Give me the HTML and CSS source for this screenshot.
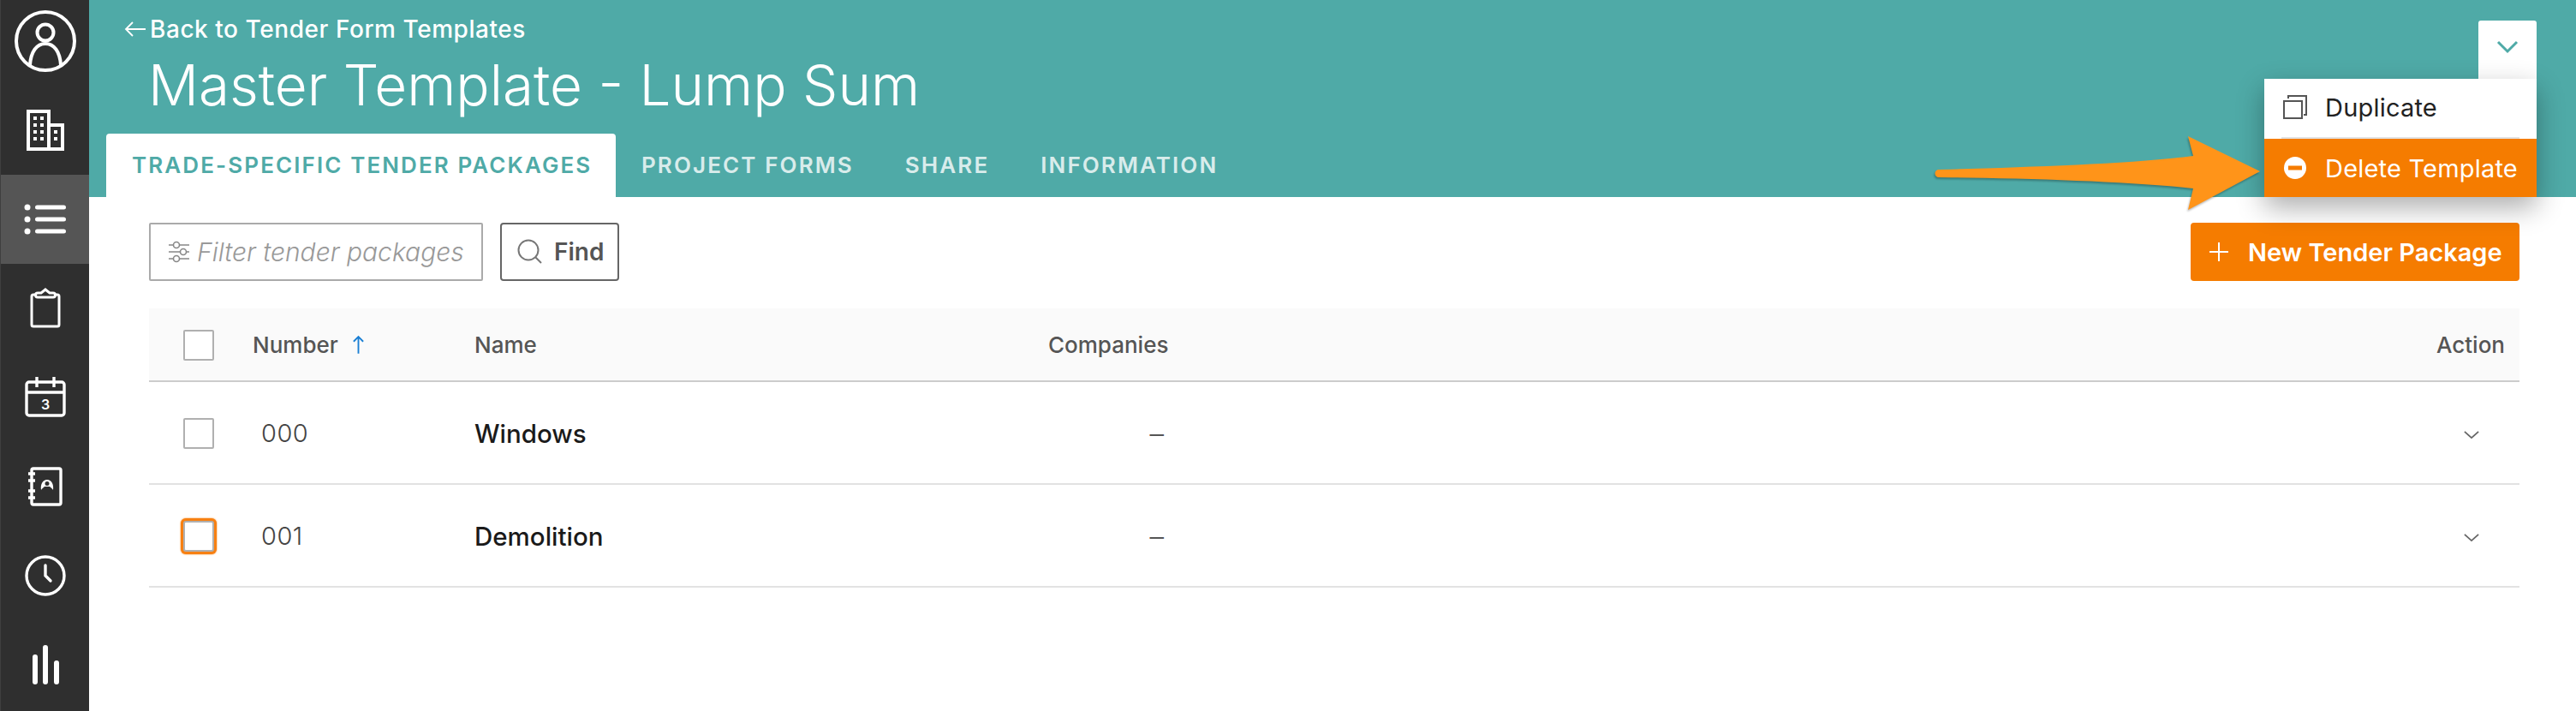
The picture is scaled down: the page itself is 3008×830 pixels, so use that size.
FILE: index.html
```html
<!DOCTYPE html>
<html lang="en">
<head>
<meta charset="utf-8">
<title>Master Template - Lump Sum</title>
<link rel="stylesheet" href="styles.css">
</head>
<body>
<div class="app">
  <nav class="sidebar">
    <a class="nav-item"><svg class="nav-icon" viewBox="0 0 80 80"><circle cx="40" cy="38" r="34"/><circle cx="40" cy="28" r="9.5"/><path d="M22 66c1-16 8-25 18-25s17 9 18 25"/></svg></a>
    <a class="nav-item"><svg class="nav-icon" viewBox="0 0 80 80"><path d="M20 62V18h24v44zM44 34h16v28H44z"/><g class="fill"><rect x="26" y="24" width="4" height="4"/><rect x="34" y="24" width="4" height="4"/><rect x="26" y="32" width="4" height="4"/><rect x="34" y="32" width="4" height="4"/><rect x="26" y="40" width="4" height="4"/><rect x="34" y="40" width="4" height="4"/><rect x="26" y="48" width="4" height="4"/><rect x="34" y="48" width="4" height="4"/><rect x="50" y="40" width="4" height="4"/><rect x="50" y="48" width="4" height="4"/></g></svg></a>
    <a class="nav-item active"><svg class="nav-icon" viewBox="0 0 80 80"><g class="fill"><circle cx="19" cy="26" r="3.5"/><circle cx="19" cy="40" r="3.5"/><circle cx="19" cy="54" r="3.5"/></g><path class="round" d="M30.500 26h31M30.500 40h31M30.500 54h31"/></svg></a>
    <a class="nav-item"><svg class="nav-icon clip" viewBox="0 0 80 80"><path d="M28 24h-2a2 2 0 0 0-2 2v33a2 2 0 0 0 2 2h28a2 2 0 0 0 2-2V26a2 2 0 0 0-2-2h-2"/><path d="M31 27a2.500 2.500 0 0 1 0-5h4l5-4 5 4h4a2.500 2.500 0 0 1 0 5z"/></svg></a>
    <a class="nav-item"><svg class="nav-icon thin" viewBox="0 0 80 80"><rect x="18" y="22" width="44" height="39" rx="3"/><path d="M18 34h44M30 16v12M50 16v12"/><text class="cal-day" x="40" y="54" text-anchor="middle">3</text></svg></a>
    <a class="nav-item"><svg class="nav-icon thin" viewBox="0 0 80 80"><rect x="24" y="19" width="34" height="42" rx="2"/><path d="M20 25h8M20 33h8M20 45h8M20 53h8"/><path class="fill even" d="M35 44c-1-7 2-12 7-12s8 5 7 12c-1-2-3-3-4-4h-6c-1 1-3 2-4 4zM42 34a2.500 2.500 0 1 0 0 5 2.500 2.500 0 0 0 0-5z"/></svg></a>
    <a class="nav-item"><svg class="nav-icon thin" viewBox="0 0 80 80"><circle cx="40" cy="40" r="22"/><path class="round" d="M40 28v12l6 6"/></svg></a>
    <a class="nav-item"><svg class="nav-icon" viewBox="0 0 80 80"><path class="bars" d="M28 31v29M40 20v40M53 38v22"/></svg></a>
  </nav>

  <main class="main">
    <header class="banner">
      <a class="back"><svg class="back-arrow" viewBox="0 0 26 20"><path d="M25 10H2M10 2l-8 8 8 8"/></svg>Back to Tender Form Templates</a>
      <h1 class="title">Master Template - Lump Sum</h1>
      <div class="tabs">
        <a class="tab current">TRADE-SPECIFIC TENDER PACKAGES</a>
        <a class="tab">PROJECT FORMS</a>
        <a class="tab">SHARE</a>
        <a class="tab">INFORMATION</a>
      </div>
      <div class="actions">
        <button class="actions-toggle"><svg class="toggle-chevron" viewBox="0 0 26 16"><path d="M2 2l11 11L24 2"/></svg></button>
        <div class="menu">
          <a class="menu-item"><svg class="menu-icon" viewBox="0 0 28 28"><path d="M1 7h21v20H1z"/><path d="M6 4V1h21v22h-3"/></svg>Duplicate</a>
          <a class="menu-item danger"><svg class="menu-icon" viewBox="0 0 28 28"><circle class="disc" cx="14" cy="14" r="13"/><rect class="bar" x="6" y="11.500" width="16" height="5"/></svg>Delete Template</a>
        </div>
      </div>
    </header>

    <section class="content">
      <div class="toolbar">
        <div class="filter">
          <svg class="filter-icon" viewBox="0 0 26 26"><path d="M1 5h5M14 5h11M1 13h13M22 13h3M1 21h5M14 21h11"/><circle cx="10" cy="5" r="3.500"/><circle cx="18" cy="13" r="3.500"/><circle cx="10" cy="21" r="3.500"/></svg>
          <span class="filter-text">Filter tender packages</span>
        </div>
        <button class="find"><svg class="find-icon" viewBox="0 0 30 30"><circle cx="13" cy="13" r="11.500"/><path d="M21 21l7 7"/></svg>Find</button>
        <button class="new"><svg class="plus" viewBox="0 0 24 24"><path d="M12 1v22M1 12h22"/></svg>New Tender Package</button>
      </div>

      <div class="table">
        <div class="row head">
          <div class="cell-check"><span class="check"></span></div>
          <div class="num-head">Number<svg class="sort" viewBox="0 0 16 24"><path d="M8 23V2M2 8l6-6 6 6"/></svg></div>
          <div>Name</div>
          <div class="companies">Companies</div>
          <div class="action">Action</div>
        </div>
        <div class="row">
          <div class="cell-check"><span class="check"></span></div>
          <div class="num">000</div>
          <div class="name">Windows</div>
          <div class="companies dash">–</div>
          <div class="action"><svg class="row-chevron" viewBox="0 0 20 11"><path d="M1 1l9 8 9-8"/></svg></div>
        </div>
        <div class="row">
          <div class="cell-check"><span class="check focus"></span></div>
          <div class="num">001</div>
          <div class="name">Demolition</div>
          <div class="companies dash">–</div>
          <div class="action"><svg class="row-chevron" viewBox="0 0 20 11"><path d="M1 1l9 8 9-8"/></svg></div>
        </div>
      </div>
    </section>
  </main>
</div>
<svg class="callout" viewBox="0 0 400 100"><path d="M14 48C120 45 240 41 311 32L305 9 389 50 305 95 311 70C240 62 120 58 14 57a4.500 4.500 0 0 1 0-9z"/></svg>
</body>
</html>
```
FILE: styles.css
```css
* { box-sizing: border-box; }
html, body { margin: 0; height: 100%; background: #fff; }
body { font-family: "Inter", "Liberation Sans", sans-serif; color: #555; position: relative; overflow: hidden; }
a { display: block; }
button { font-family: inherit; }

.app { display: flex; height: 830px; }

.sidebar { width: 104px; flex: none; background: #2f2f2f; border-left: 1px solid #3f3f3f; display: flex; flex-direction: column; }
.nav-item { height: 104px; flex: none; display: flex; align-items: center; justify-content: center; }
.nav-item:first-child { height: 100px; }
.nav-item.active { background: #555; }
.nav-icon { width: 80px; height: 80px; fill: none; stroke: #fff; stroke-width: 4; }
.nav-icon.thin { stroke-width: 3.4; }
.nav-icon.clip { stroke-width: 3; }
.nav-icon .fill { fill: #fff; stroke: none; }
.nav-icon .even { fill-rule: evenodd; }
.nav-icon .round { stroke-linecap: round; stroke-width: 5; }
.nav-icon.thin .round { stroke-width: 3.4; }
.nav-icon .bars { stroke-linecap: round; stroke-width: 6; }
.cal-day { font-size: 16px; font-weight: 600; fill: #fff; stroke: none; }

.main { flex: 1; min-width: 0; display: flex; flex-direction: column; }

.banner { position: relative; height: 230px; flex: none; background: #4faaa7; color: #fff; padding: 16px 0 0 20px; display: flex; flex-direction: column; }
.back { display: flex; align-items: center; gap: 4px; height: 36px; margin-left: 21px; font-size: 28px; font-weight: 500; letter-spacing: .55px; }
.back-arrow { width: 26px; height: 20px; flex: none; fill: none; stroke: #fff; stroke-width: 1.8; }
.title { margin: 8px 0 0 49px; height: 80px; line-height: 80px; font-size: 65.5px; font-weight: 300; }
.tabs { display: flex; margin-top: 16px; height: 74px; }
.tab { padding: 0 30px; line-height: 74px; font-size: 26px; font-weight: 600; letter-spacing: 2.1px; color: rgba(255,255,255,.8); white-space: nowrap; }
.tab.current { background: #fff; color: #4faaa7; border-radius: 4px 4px 0 0; width: 595px; }

.actions { position: absolute; top: 24px; right: 46px; z-index: 5; }
.actions-toggle { display: flex; align-items: center; justify-content: center; width: 68px; height: 68px; margin-left: auto; padding: 0 0 6px; border: 0; background: #fff; border-radius: 3px 3px 0 0; }
.toggle-chevron { width: 26px; height: 16px; fill: none; stroke: #4faaa7; stroke-width: 3; }
.menu { width: 318px; background: #fff; box-shadow: 0 12px 30px rgba(0,0,0,.32); }
.menu-item { display: flex; align-items: center; gap: 21px; height: 68px; padding: 0 22px; font-size: 29px; letter-spacing: .2px; color: #222; white-space: nowrap; }
.menu-item.danger { height: 68px; background: #f57c00; color: #fff; }
.menu-item:first-child { height: 70px; padding-bottom: 4px; position: relative; }
.menu-item:first-child::after { content: ""; position: absolute; left: 20px; right: 20px; bottom: 0; height: 2px; background: #e2e2e2; }
.menu-icon { width: 28px; height: 28px; flex: none; fill: none; stroke: #555; stroke-width: 2; }
.menu-icon .disc { fill: #fff; stroke: none; }
.menu-icon .bar { fill: #f57c00; stroke: none; }

.content { padding: 30px 66px 0 70px; }
.toolbar { display: flex; align-items: stretch; height: 68px; gap: 20px; }
.filter { width: 390px; display: flex; align-items: center; gap: 8px; padding-left: 20px; border: 2px solid #aaa; border-radius: 2px; }
.filter-icon { width: 26px; height: 26px; flex: none; fill: none; stroke: #888; stroke-width: 1.6; }
.filter-text { font-size: 30px; font-style: italic; font-weight: 300; color: #999; white-space: nowrap; }
.find { display: flex; align-items: center; gap: 13px; width: 139px; padding: 0 0 0 18px; border: 2px solid #666; border-radius: 4px; background: #fff; color: #555; font-size: 28px; font-weight: 600; }
.find-icon { width: 30px; height: 30px; flex: none; fill: none; stroke: #777; stroke-width: 2; }
.new { display: flex; align-items: center; gap: 22px; margin-left: auto; width: 384px; padding: 0 0 0 21px; border: 0; border-radius: 4px; background: #f57c00; color: #fff; font-size: 29px; font-weight: 600; white-space: nowrap; }
.plus { width: 24px; height: 24px; flex: none; fill: none; stroke: #fff; stroke-width: 2; }

.table { margin-top: 32px; }
.row { display: grid; grid-template-columns: 121px 259px 670px 140px 1fr; align-items: center; height: 120px; border-bottom: 2px solid #e2e2e2; font-size: 26px; padding-top: 1px; }
.row.head { height: 86px; background: #fafafa; border-bottom-color: #ccc; font-weight: 500; color: #555; }
.cell-check { padding-left: 40px; display: flex; }
.check { display: block; width: 36px; height: 36px; border: 2px solid #b0b0b0; border-radius: 2px; background: #fff; }
.check.focus { box-shadow: 0 0 0 3px #f78012, 0 0 2px 3px #f78012; border-radius: 3px; }
.num-head { display: flex; align-items: center; gap: 16px; }
.sort { width: 15px; height: 23px; fill: none; stroke: #1a7fd4; stroke-width: 2; }
.num { padding-left: 10px; font-weight: 300; color: #444; font-size: 29px; letter-spacing: .5px; }
.name { font-weight: 500; color: #1a1a1a; font-size: 29.5px; }
.companies { text-align: right; white-space: nowrap; }
.dash { padding-right: 5px; font-size: 33px; font-weight: 300; }
.action { text-align: right; padding-right: 17px; display: flex; justify-content: flex-end; }
.row-chevron { width: 18px; height: 10px; margin: 4px 30px 0 0; fill: none; stroke: #666; stroke-width: 2; }

.callout { position: absolute; left: 2250px; top: 150px; width: 400px; height: 100px; fill: #ff9419; filter: drop-shadow(-1px 2px 1px rgba(0,0,0,.28)); z-index: 6; }
```
